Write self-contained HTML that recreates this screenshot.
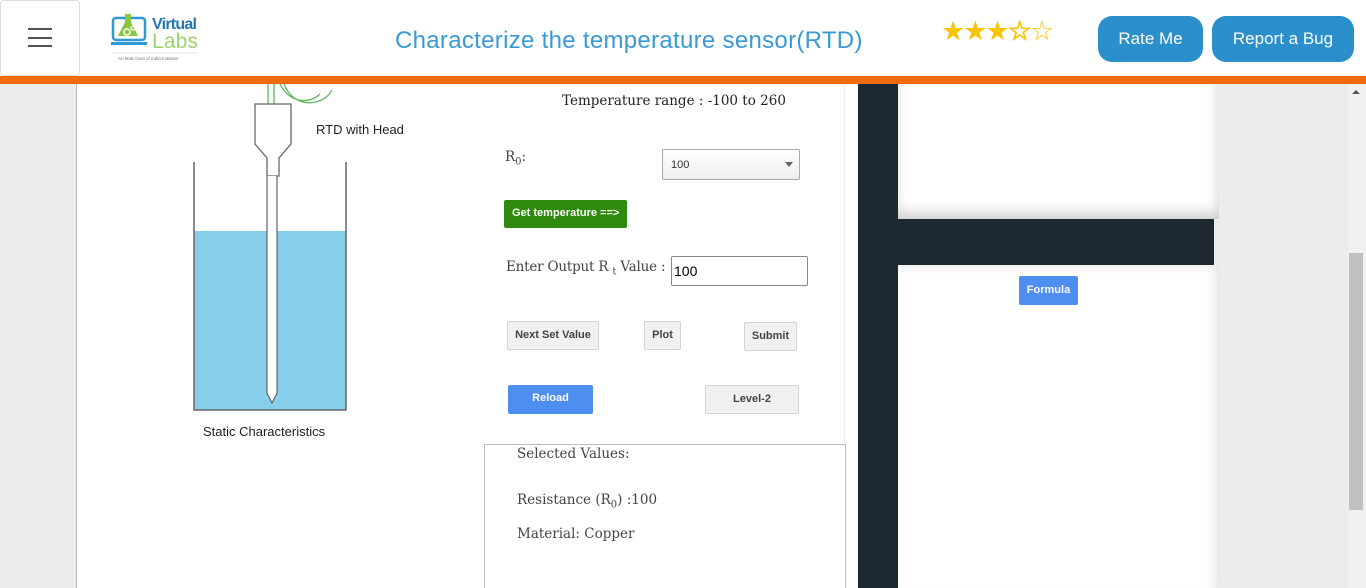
<!DOCTYPE html>
<html><head><meta charset="utf-8"><style>
*{margin:0;padding:0;box-sizing:border-box}
html,body{width:1366px;height:588px;overflow:hidden}
body{background:#ececec;font-family:"Liberation Sans",sans-serif;position:relative}
.abs{position:absolute;white-space:nowrap}
.serif{font-family:"DejaVu Serif","Liberation Serif",serif;color:#444;font-size:13.5px}
.btn{position:absolute;background:#f1f1f1;border:1px solid #d4d4d4;border-radius:2px;font:bold 11px "Liberation Sans",sans-serif;color:#444;text-align:center}
</style></head><body>
<div class="abs" style="left:76px;top:84px;width:782px;height:504px;background:#fff;border-left:1px solid #bbb"></div>
<div class="abs" style="left:844px;top:84px;width:1px;height:360px;background:#eee"></div>
<div class="abs" style="left:858px;top:84px;width:356px;height:504px;background:#1c2930"></div>
<div class="abs" style="left:898px;top:84px;width:321px;height:135px;background:#fff;box-shadow:inset 0 -14px 14px -8px #ccc,inset -10px 0 12px -8px #ddd,inset 10px 0 12px -8px #eee"></div>
<div class="abs" style="left:898px;top:265px;width:321px;height:323px;background:#fff;box-shadow:inset -10px 0 12px -8px #ddd,inset 0 10px 10px -8px #eee"></div>
<div class="abs" style="left:1019px;top:276px;width:59px;height:29px;background:#4d8ef0;border-radius:2px;color:#fff;font:bold 11px 'Liberation Sans',sans-serif;text-align:center;line-height:28px">Formula</div>
<div class="abs" style="left:1348px;top:84px;width:18px;height:504px;background:#f1f1f1"></div>
<div class="abs" style="left:1349px;top:253px;width:14px;height:257px;background:#c1c1c1"></div>
<div class="abs" style="left:1352px;top:90px;width:0;height:0;border:4px solid transparent;border-bottom:4px solid #555;border-top:0"></div>
<div class="abs" style="left:0;top:0;width:1366px;height:76px;background:#fff"></div>
<div class="abs" style="left:0;top:76px;width:1366px;height:8px;background:#f06a0e"></div>
<div class="abs" style="left:0;top:0;width:80px;height:76px;border:1px solid #ddd;border-radius:3px;background:#fff"></div>
<div class="abs" style="left:28px;top:28px;width:24px;height:2px;background:#555"></div>
<div class="abs" style="left:28px;top:37px;width:24px;height:2px;background:#555"></div>
<div class="abs" style="left:28px;top:45px;width:24px;height:2px;background:#555"></div>
<svg class="abs" style="left:110px;top:12px" width="90" height="50">
<rect x="3" y="6" width="32" height="22" rx="3" fill="none" stroke="#2f9ad6" stroke-width="2.5"/>
<rect x="1" y="30" width="36" height="3" fill="#2f9ad6"/>
<path d="M15 2h6v8l7 14h-20l7-14z" fill="#8cc63f"/>
<circle cx="17" cy="20" r="3" fill="none" stroke="#fff" stroke-width="1.5"/>
<circle cx="23" cy="16" r="2" fill="none" stroke="#fff" stroke-width="1.2"/>
<text x="42" y="17" font-family="Liberation Sans" font-size="16" font-weight="bold" fill="#2577b0" textLength="45">Virtual</text>
<text x="42" y="36" font-family="Liberation Sans" font-size="21" fill="#9fd46a" textLength="46">Labs</text>
<line x1="2" y1="41" x2="88" y2="41" stroke="#ccc" stroke-width="0.6"/>
<text x="8" y="48" font-family="Liberation Sans" font-size="4.5" fill="#777">An MoE Govt of India Initiative</text>
</svg>
<div class="abs" style="left:395px;top:27px;font-size:24px;color:#3a9ad5;letter-spacing:0.3px">Characterize the temperature sensor(RTD)</div>
<div class="abs" style="left:941px;top:16px;font-size:27px;color:#fbc400;letter-spacing:-2px">★★★<span style="background:linear-gradient(90deg,#fbc400 50%,transparent 50%);-webkit-background-clip:text;color:transparent;-webkit-text-stroke:0.8px #fbc400">☆</span><span>☆</span></div>
<div class="abs" style="left:1098px;top:16px;width:105px;height:46px;background:#2b8fcc;border-radius:14px;color:#fff;font-size:17px;text-align:center;line-height:45px">Rate Me</div>
<div class="abs" style="left:1212px;top:16px;width:142px;height:46px;background:#2b8fcc;border-radius:14px;color:#fff;font-size:17px;text-align:center;line-height:45px">Report a Bug</div>
<svg class="abs" style="left:180px;top:84px" width="200" height="330">
<path d="M88 0v20M94 0v20M100 0c10 20 30 20 40 10M104 0c10 26 40 22 48 6" stroke="#5cb85c" stroke-width="1.3" fill="none"/>
<rect x="14" y="147" width="152" height="179" fill="#87ceeb"/>
<path d="M14 78v248h152v-248" stroke="#666" stroke-width="1.5" fill="none"/>
<path d="M75 20h36v40l-12 14v18h-12v-18l-12-14z" fill="#fff" stroke="#666" stroke-width="1.3"/>
<path d="M87 92v217l5 10 5-10v-217" fill="#fff" stroke="#666" stroke-width="1.2"/>
</svg>
<div class="abs" style="left:316px;top:122px;font-size:13px;color:#222">RTD with Head</div>
<div class="abs" style="left:203px;top:424px;font-size:13px;color:#222">Static Characteristics</div>
<div class="abs serif" style="left:562px;top:70px;color:#222;clip-path:inset(14px 0 0 0)">α value: 0.00427</div>
<div class="abs serif" style="left:562px;top:93px;color:#222">Temperature range : -100 to 260</div>
<div class="abs serif" style="left:505px;top:149px">R<sub style="font-size:10px">0</sub>:</div>
<div class="abs" style="left:662px;top:149px;width:138px;height:31px;border:1px solid #aaa;border-radius:2px;background:linear-gradient(#fff,#eee);font-size:11px;color:#333;padding:9px 8px">100</div>
<div class="abs" style="left:785px;top:162px;border:4px solid transparent;border-top:5px solid #666;border-bottom:0"></div>
<div class="abs" style="left:504px;top:200px;width:123px;height:28px;background:#2d8a0c;border-radius:2px;color:#fff;font:bold 11px 'Liberation Sans',sans-serif;line-height:26px;padding-left:8px">Get temperature ==&gt;</div>
<div class="abs serif" style="left:506px;top:259px;letter-spacing:-0.2px">Enter Output R <sub style="font-size:10px">t</sub> Value :</div>
<div class="abs" style="left:671px;top:256px;width:137px;height:30px;border:1px solid #888;border-radius:2px;background:#fff;font-size:14px;color:#000;padding:6px 2px">100</div>
<div class="btn" style="left:507px;top:321px;width:92px;height:29px;line-height:26px">Next Set Value</div>
<div class="btn" style="left:644px;top:321px;width:37px;height:29px;line-height:26px">Plot</div>
<div class="btn" style="left:744px;top:322px;width:53px;height:29px;line-height:27px">Submit</div>
<div class="abs" style="left:508px;top:385px;width:85px;height:29px;background:#4d8ef0;border-radius:2px;color:#fff;font:bold 11px 'Liberation Sans',sans-serif;text-align:center;line-height:27px">Reload</div>
<div class="btn" style="left:705px;top:385px;width:94px;height:29px;line-height:26px">Level-2</div>
<div class="abs" style="left:484px;top:444px;width:362px;height:150px;border:1px solid #bbb;background:#fff"></div>
<div class="abs serif" style="left:517px;top:446px">Selected Values:</div>
<div class="abs serif" style="left:517px;top:492px">Resistance (R<sub style="font-size:10px">0</sub>) :100</div>
<div class="abs serif" style="left:517px;top:526px">Material: Copper</div>
</body></html>
